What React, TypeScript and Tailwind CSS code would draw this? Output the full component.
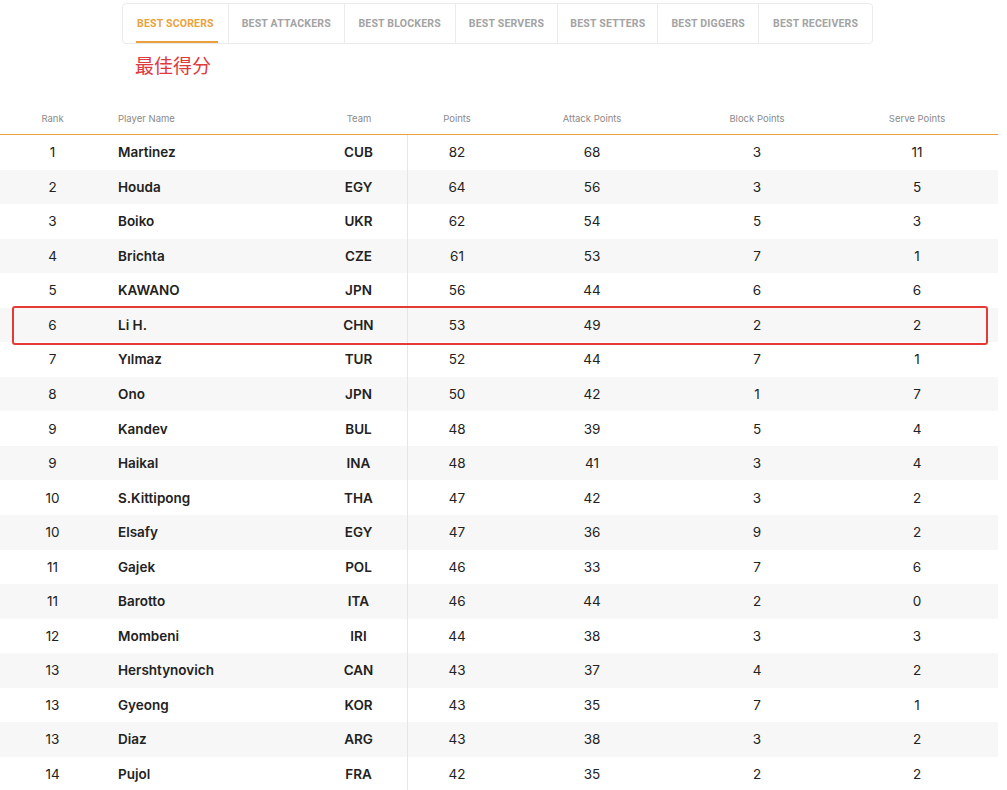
const tabs = ["BEST SCORERS","BEST ATTACKERS","BEST BLOCKERS","BEST SERVERS","BEST SETTERS","BEST DIGGERS","BEST RECEIVERS"];
const tabW = [105,116,111,103,100,101,114];
const rows: [string,string,string,number,number,number,number][] = [
["1","Martinez","CUB",82,68,3,11],["2","Houda","EGY",64,56,3,5],["3","Boiko","UKR",62,54,5,3],["4","Brichta","CZE",61,53,7,1],["5","KAWANO","JPN",56,44,6,6],["6","Li H.","CHN",53,49,2,2],["7","Yılmaz","TUR",52,44,7,1],["8","Ono","JPN",50,42,1,7],["9","Kandev","BUL",48,39,5,4],["9","Haikal","INA",48,41,3,4],["10","S.Kittipong","THA",47,42,3,2],["10","Elsafy","EGY",47,36,9,2],["11","Gajek","POL",46,33,7,6],["11","Barotto","ITA",46,44,2,0],["12","Mombeni","IRI",44,38,3,3],["13","Hershtynovich","CAN",43,37,4,2],["13","Gyeong","KOR",43,35,7,1],["13","Diaz","ARG",43,38,3,2],["14","Pujol","FRA",42,35,2,2]];
const cols = "grid grid-cols-[105px_205px_98px_98px_172px_158px_162px]";
export default function App(){
  return (
    <div className="w-[1007px] h-[790px] overflow-hidden bg-white relative" style={{fontFamily:'Inter, "Noto Sans", "Noto Sans CJK SC", sans-serif'}}>
      <div className="pl-[122px] pt-[3px]">
        <div className="flex w-[751px] h-[41px] border border-[#ebebeb] rounded-sm">
          {tabs.map((t,i)=>(
            <div key={t} style={{width:tabW[i]}} className={`relative flex items-center justify-center text-[10.5px] font-bold tracking-[0.2px] ${i>0?"border-l border-[#ebebeb]":""} ${i===0?"text-[#e9a23b]":"text-[#a3a3a3]"}`} >
              <span style={{fontFamily:'Roboto, sans-serif'}}>{t}</span>
              {i===0 && <div className="absolute bottom-0 left-[13px] right-[10px] h-[2px] bg-[#e9a23b]"/>}
            </div>
          ))}
        </div>
        <div className="pl-[13px] mt-[10px] text-[19px] text-[#e0393e] leading-[26px]">最佳得分</div>
      </div>
      <div className="w-[998px] mt-[24px]">
        <div className={`${cols} h-[31px] items-center text-[9.5px] text-[#8a8a8a] border-b border-[#e9a23b]`}>
          <div className="text-center">Rank</div><div className="pl-[13px]">Player Name</div><div className="text-center">Team</div><div className="text-center">Points</div><div className="text-center">Attack Points</div><div className="text-center">Block Points</div><div className="text-center">Serve Points</div>
        </div>
        {rows.map((r,i)=>(
          <div key={i} className={`${cols} h-[34.55px] items-center text-[13.5px] text-[#222] ${i%2?"bg-[#f7f7f7]":""}`}>
            <div className="text-center">{r[0]}</div>
            <div className="pl-[13px] font-semibold">{r[1]}</div>
            <div className="text-center font-semibold h-full flex items-center justify-center border-r border-[#e6e6e6]">{r[2]}</div>
            <div className="text-center">{r[3]}</div>
            <div className="text-center">{r[4]}</div>
            <div className="text-center">{r[5]}</div>
            <div className="text-center">{r[6]}</div>
          </div>
        ))}
      </div>
      <div className="absolute left-[12px] top-[306px] w-[976px] h-[39px] border-[2.5px] border-[#e53935] rounded-[3px]"/>
    </div>
  );
}
